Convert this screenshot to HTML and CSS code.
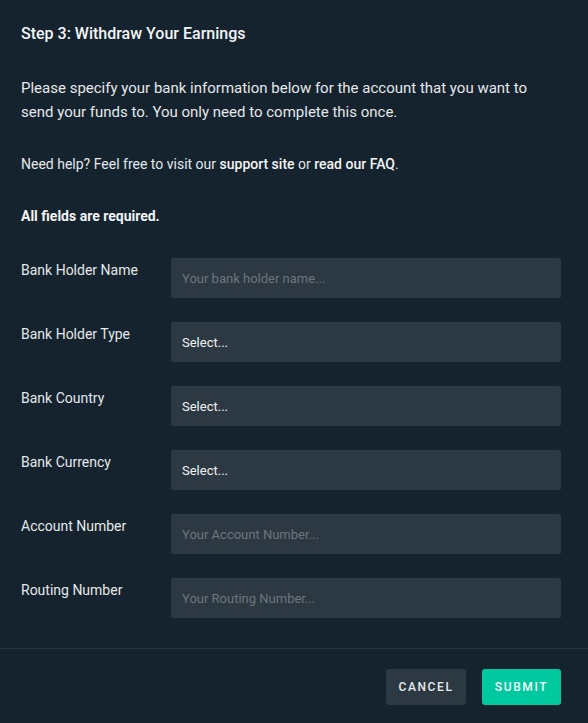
FILE: index.html
```html
<!DOCTYPE html>
<html>
	<head>
		<title>Withdraw Your Earnings</title>
		<link rel="stylesheet" href="styles.css">
	</head>
	<body>
		<div class="modal">
			<div class="modal-body">
				<h2 class="title">Step 3: Withdraw Your Earnings</h2>
				<p class="intro">Please specify your bank information below for the account that you want to send your funds to. You only need to complete this once.</p>
				<p class="help">Need help? Feel free to visit our <a href="#">support site</a> or <a href="#">read our FAQ</a>.</p>
				<p class="required">All fields are required.</p>
				<form class="fields">
					<div class="row">
						<label for="holder">Bank Holder Name</label>
						<input type="text" id="holder" placeholder="Your bank holder name...">
					</div>
					<div class="row">
						<label>Bank Holder Type</label>
						<div class="select">Select...</div>
					</div>
					<div class="row">
						<label>Bank Country</label>
						<div class="select">Select...</div>
					</div>
					<div class="row">
						<label>Bank Currency</label>
						<div class="select">Select...</div>
					</div>
					<div class="row">
						<label for="account">Account Number</label>
						<input type="text" id="account" placeholder="Your Account Number...">
					</div>
					<div class="row">
						<label for="routing">Routing Number</label>
						<input type="text" id="routing" placeholder="Your Routing Number...">
					</div>
				</form>
			</div>
			<div class="modal-footer">
				<button class="btn btn-cancel">Cancel</button>
				<button class="btn btn-submit">Submit</button>
			</div>
		</div>
	</body>
</html>
```

FILE: styles.css
```css
body {
	margin: 0;
	background: #15232e;
	color: #e4e8ea;
	font-family: Roboto, "Liberation Sans", sans-serif;
	font-size: 14px;
}

.modal {
	width: 588px;
	height: 723px;
	display: flex;
	flex-direction: column;
}

.modal-body {
	padding: 24px 27px 0 21px;
	flex: 1;
}

.title {
	margin: 0;
	font-size: 16px;
	font-weight: 500;
	line-height: 20px;
	color: #f2f4f5;
}

.intro {
	margin: 32px 0 0;
	max-width: 520px;
	font-size: 15px;
	line-height: 24px;
}

.help {
	margin: 28px 0 0;
	line-height: 24px;
}

.help a {
	color: #f2f4f5;
	font-weight: 500;
	text-decoration: none;
}

.required {
	margin: 28px 0 0;
	line-height: 24px;
	font-weight: 700;
	color: #f2f4f5;
}

.fields {
	margin-top: 30px;
	display: flex;
	flex-direction: column;
	gap: 24px;
}

.row {
	display: flex;
	align-items: flex-start;
}

.row label {
	width: 150px;
	line-height: 24px;
}

.row input,
.row .select {
	flex: 1;
	box-sizing: border-box;
	height: 40px;
	margin: 0;
	padding: 1px 11px 0;
	border: none;
	border-radius: 2px;
	background: #2c3942;
	color: #eef1f2;
	font-family: inherit;
	font-size: 13px;
	line-height: 39px;
	outline: none;
}

.row input::placeholder {
	color: #6b767d;
}

.modal-footer {
	border-top: 1px solid #25323c;
	padding: 20px 27px 18px 0;
	display: flex;
	justify-content: flex-end;
	gap: 16px;
}

.btn {
	height: 36px;
	border: none;
	border-radius: 3px;
	font-family: inherit;
	font-size: 12px;
	font-weight: 500;
	letter-spacing: 1.6px;
	text-transform: uppercase;
	cursor: pointer;
}

.btn-cancel {
	width: 80px;
	background: #2c3942;
	color: #e8ebed;
}

.btn-submit {
	width: 79px;
	background: #00c9a0;
	color: #f4fbf9;
}
```
